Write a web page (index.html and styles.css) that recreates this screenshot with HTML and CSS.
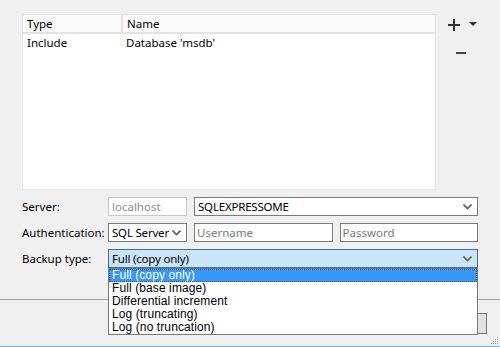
FILE: index.html
```html
<!DOCTYPE html>
<html>
<head>
<meta charset="utf-8">
<link rel="stylesheet" href="styles.css">
</head>
<body>
<div class="window">
  <div class="top">
    <div class="grid">
      <div class="head">
        <div class="hcell c1">Type</div>
        <div class="hcell c2">Name</div>
      </div>
      <div class="row">
        <div class="cell c1">Include</div>
        <div class="cell c2">Database 'msdb'</div>
      </div>
    </div>
    <div class="tools">
      <div class="addrow">
        <svg class="plus" width="12" height="12" viewBox="0 0 12 12"><path d="M5 0h2v12H5zM0 5h12v2H0z" fill="#333"/></svg>
        <svg class="tri" width="8" height="5" viewBox="0 0 8 5"><path d="M0 0h8L4 4z" fill="#333"/></svg>
      </div>
      <svg class="minus" width="10" height="2" viewBox="0 0 10 2"><path d="M0 0h10v2H0z" fill="#444"/></svg>
    </div>
  </div>
  <div class="form">
    <div class="label">Server:</div>
    <div class="fields">
      <div class="input disabled w80">localhost</div>
      <div class="combo grow"><span class="txt">SQLEXPRESSOME</span><svg class="chev" width="9" height="6" viewBox="0 0 9 6"><path d="M0.5 0.5L4.5 4.5L8.5 0.5" stroke="#606060" stroke-width="1.6" fill="none"/></svg></div>
    </div>
    <div class="label">Authentication:</div>
    <div class="fields">
      <div class="combo w80"><span class="txt">SQL Server</span><svg class="chev" width="9" height="6" viewBox="0 0 9 6"><path d="M0.5 0.5L4.5 4.5L8.5 0.5" stroke="#606060" stroke-width="1.6" fill="none"/></svg></div>
      <div class="input ph grow">Username</div>
      <div class="input ph grow">Password</div>
    </div>
    <div class="label">Backup type:</div>
    <div class="fields">
      <div class="combo open grow"><span class="txt">Full (copy only)</span><svg class="chev" width="9" height="6" viewBox="0 0 9 6"><path d="M0.5 0.5L4.5 4.5L8.5 0.5" stroke="#606060" stroke-width="1.6" fill="none"/></svg>
        <ul class="list">
          <li class="sel">Full (copy only)</li>
          <li>Full (base image)</li>
          <li>Differential increment</li>
          <li>Log (truncating)</li>
          <li>Log (no truncation)</li>
        </ul>
      </div>
    </div>
  </div>
  <div class="sep"></div>
  <div class="buttons">
    <div class="btn"></div>
  </div>
  <div class="status">
    <svg class="grip" width="10" height="10" viewBox="0 0 10 10"><g fill="#a8a8a8"><rect x="8" y="2" width="1" height="1"/><rect x="6" y="4" width="1" height="1"/><rect x="8" y="4" width="1" height="1"/><rect x="4" y="6" width="1" height="1"/><rect x="6" y="6" width="1" height="1"/><rect x="8" y="6" width="1" height="1"/><rect x="2" y="8" width="1" height="1"/><rect x="4" y="8" width="1" height="1"/><rect x="6" y="8" width="1" height="1"/><rect x="8" y="8" width="1" height="1"/></g></svg>
  </div>
</div>
</body>
</html>
```
FILE: styles.css
```css
* { box-sizing: border-box; }
html, body { margin: 0; padding: 0; }
body {
  width: 500px;
  height: 347px;
  background: #f0f0f0;
  font-family: "Noto Sans", "Open Sans", sans-serif;
  font-size: 11.5px;
  color: #000;
  overflow: hidden;
}
.window { display: flex; flex-direction: column; height: 347px; }
.top { display: flex; padding: 14px 0 0 22px; }
.grid {
  width: 414px;
  height: 176px;
  background: #fff;
  border: 1px solid #e3e3e3;
  border-top: none;
}
.head { display: flex; height: 20px; background: #fafafa; border-top: 1px solid #e3e3e3; border-bottom: 2px solid #e3e3e3; }
.hcell { line-height: 18px; padding-left: 4px; }
.head .c1 { width: 100px; border-right: 2px solid #e3e3e3; }
.row { display: flex; height: 18px; }
.cell { line-height: 18px; padding-left: 4px; }
.row .c1 { width: 99px; }
.tools { display: flex; flex-direction: column; padding: 5px 0 0 12px; }
.addrow { display: flex; align-items: center; gap: 9px; }
.tri { margin-top: -1px; }
.minus { margin: 21px 0 0 8px; }
.form {
  display: grid;
  grid-template-columns: 86px 370px;
  row-gap: 7px;
  padding: 7px 0 0 22px;
}
.label { height: 19px; line-height: 19px; }
.fields { display: flex; gap: 7px; height: 19px; }
.input, .combo {
  height: 19px;
  line-height: 17px;
  border: 1px solid #7a7a7a;
  background: #fff;
  padding: 0 3px;
  white-space: nowrap;
  overflow: hidden;
}
.w80 { width: 79px; flex: none; }
.grow { flex: 1; }
.disabled { border-color: #c8c8c8; color: #8d8d8d; }
.ph { color: #7b7b7b; padding-left: 2px; }
.combo { display: flex; align-items: center; justify-content: space-between; padding-right: 5px; line-height: normal; gap: 3px; }
.combo .txt { overflow: hidden; white-space: nowrap; letter-spacing: -0.2px; }
.combo .chev { flex: none; }
.combo.open { background: #c9e5f6; border-color: #3a6f9c; overflow: visible; position: relative; }
.list {
  position: absolute;
  left: -1px;
  right: -1px;
  top: 18px;
  margin: 0;
  padding: 0;
  list-style: none;
  background: #fff;
  border: 1px solid #7a7a7a;
  font-family: "Liberation Sans", Arial, sans-serif;
  font-size: 12px;
  letter-spacing: 0.1px;
  z-index: 2;
}
.list li { height: 13px; line-height: 13px; padding-left: 3px; }
.list li.sel { background: #3399ff; color: #fff; outline: 1px dotted #555; outline-offset: -1px; }
.sep { margin-top: 31px; height: 1px; background: #a0a0a0; }
.buttons { height: 46px; display: flex; justify-content: flex-end; padding: 13px 13px 0 0; }
.btn { width: 80px; height: 21px; background: #e1e1e1; border: 1px solid #7a7a7a; }
.status { flex: 1; position: relative; border-bottom: 1px solid #7ab7d6; }
.grip { position: absolute; right: 1px; bottom: 1px; }
```
